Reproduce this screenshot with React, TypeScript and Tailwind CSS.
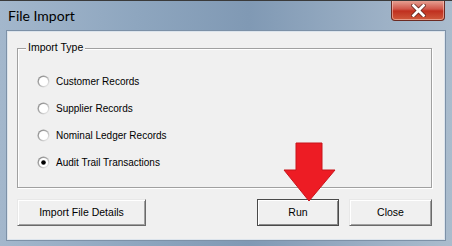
const options = [
  { label: "Customer Records", checked: false },
  { label: "Supplier Records", checked: false },
  { label: "Nominal Ledger Records", checked: false },
  { label: "Audit Trail Transactions", checked: true },
];

const sans = { fontFamily: '"Liberation Sans", Arial, sans-serif' };

function Radio({ checked }: { checked: boolean }) {
  return (
    <svg width="13" height="13" viewBox="0 0 13 13" className="shrink-0">
      <defs>
        <linearGradient id="rg" x1="0" y1="0" x2="1" y2="1">
          <stop offset="0" stopColor="#808080" />
          <stop offset="0.55" stopColor="#b8b8b8" />
          <stop offset="1" stopColor="#ffffff" />
        </linearGradient>
      </defs>
      <circle cx="6.5" cy="6.5" r="6" fill="url(#rg)" />
      <circle cx="6.5" cy="6.5" r="4.6" fill="#ffffff" />
      {checked && <circle cx="6.5" cy="6.5" r="2.3" fill="#000000" />}
    </svg>
  );
}

function WinButton({ label, isDefault, className }: { label: string; isDefault?: boolean; className: string }) {
  return (
    <button
      type="button"
      className={
        "h-[27px] border bg-[#f0f0f0] text-[10.5px] text-black " +
        (isDefault
          ? "border-[#4a4a4a] shadow-[inset_1px_1px_0_#fff,inset_-1px_-1px_0_#8a8a8a] "
          : "border-t-[#e8e8e8] border-l-[#e8e8e8] border-r-[#6a6a6a] border-b-[#6a6a6a] shadow-[inset_1px_1px_0_#fff,inset_-1px_-1px_0_#a0a0a0] ") +
        className
      }
      style={sans}
    >
      {label}
    </button>
  );
}

export default function App() {
  return (
    <div className="relative flex h-[246px] w-[452px] flex-col overflow-hidden border-t border-[#3a3a3a] bg-[linear-gradient(90deg,#a3b7cc,#8ea6bf_30%,#8099b4_55%,#9db1c6_85%,#aabccd)]">
      {/* title bar */}
      <div className="flex h-[30px] shrink-0 items-start justify-between">
        <span
          className="ml-[8px] mt-[6px] text-[14px] leading-[18px] text-black"
          style={{ fontFamily: 'Lato, "Noto Sans", sans-serif' }}
        >
          File Import
        </span>
        <div className="mr-[7px] -mt-px flex h-[21px] w-[54px] items-center justify-center rounded-b-[4px] border border-t-0 border-[#6b2a22] bg-[linear-gradient(180deg,#e8a89a,#d0574a_45%,#c0301f_55%,#cf5a3c)] shadow-[inset_0_0_0_1px_rgba(255,220,210,0.5)]">
          <svg width="15" height="13" viewBox="0 0 15 13">
            <path d="M2.5 1.5 L12.5 11.5 M12.5 1.5 L2.5 11.5" stroke="#5a1e16" strokeWidth="4.2" strokeLinecap="square" />
            <path d="M2.5 1.5 L12.5 11.5 M12.5 1.5 L2.5 11.5" stroke="#ffffff" strokeWidth="2.8" strokeLinecap="square" />
          </svg>
        </div>
      </div>

      {/* client area */}
      <div className="mx-[7px] mb-[6px] flex flex-1 flex-col border border-[#dce4ec] bg-[#f0f0f0] shadow-[0_0_0_1px_#7d91a7]">
        <div
          className="relative ml-[9px] mr-[12px] mt-[16px] h-[140px] border border-[#a0a0a0] shadow-[1px_1px_0_#fff,inset_1px_1px_0_#fff]"
          style={sans}
        >
          <span className="absolute -top-[8px] left-[8px] bg-[#f0f0f0] px-[2px] text-[10.5px] leading-[13px] text-black">
            Import Type
          </span>
          <div className="ml-[19px] mt-[26px] flex flex-col gap-[14px]">
            {options.map((o) => (
              <label key={o.label} className="flex h-[13px] items-center gap-[6px] text-[10px] text-black">
                <Radio checked={o.checked} />
                <span>{o.label}</span>
              </label>
            ))}
          </div>
        </div>

        <div className="ml-[9px] mr-[12px] mt-[11px] flex">
          <WinButton label="Import File Details" className="w-[129px]" />
          <WinButton label="Run" isDefault className="ml-auto w-[82px]" />
          <WinButton label="Close" className="ml-[10px] w-[83px]" />
        </div>
      </div>

      {/* red arrow annotation */}
      <svg className="absolute left-[283px] top-[141px]" width="53" height="60" viewBox="0 0 53 60">
        <path
          d="M13 1 H39 V28 H52 L26 59 L1 28 H13 Z"
          fill="#ed1c24"
          stroke="#c8141b"
          strokeWidth="1"
          strokeLinejoin="round"
        />
      </svg>
    </div>
  );
}
